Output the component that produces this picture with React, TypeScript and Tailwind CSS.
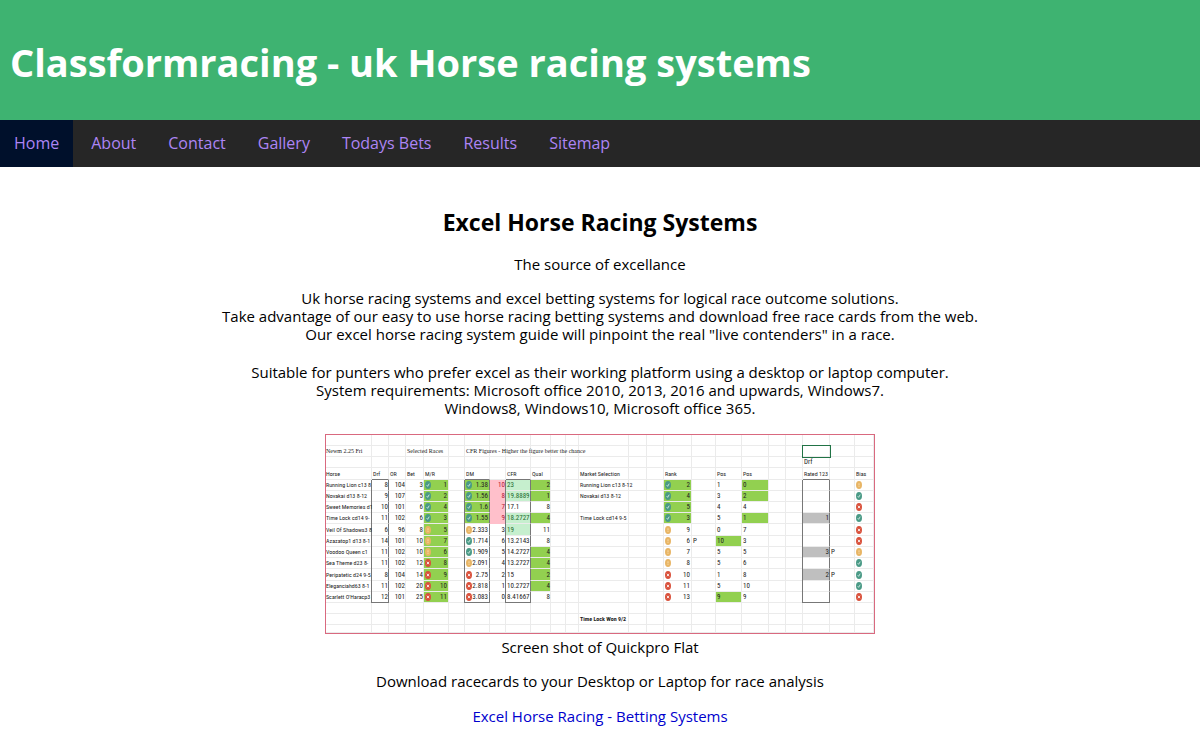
import { clsx } from "clsx"

type Mark = "ok" | "warn" | "bad"

type Runner = {
  horse: string
  drf: number
  or: number
  bet: number
  mr: number
  mrMark: Mark
  dm: string
  dmMark: Mark
  rating: number
  cfr: string
  cfrHot?: boolean
  qual: number
  qualHot?: boolean
  selection?: string
  rank: number
  rankMark: Mark
  placed?: string
  pos1: number
  pos1Hot?: boolean
  pos2: number
  pos2Hot?: boolean
  rated?: number
  ratedNote?: string
  bias: Mark
}

const NAV = ["Home", "About", "Contact", "Gallery", "Todays Bets", "Results", "Sitemap"]

const COLUMNS = [
  "w-[46px]", "w-[17px]", "w-[17px]", "w-[18px]", "w-[25px]", "w-[16px]", "w-[25px]", "w-[16px]",
  "w-[25px]", "w-[20px]", "w-[15px]", "w-[13px]", "w-[50px]", "w-[18px]", "w-[17px]", "w-[28px]",
  "w-[24px]", "w-[26px]", "w-[27px]", "w-[17px]", "w-[17px]", "w-[27px]", "w-[25px]", "w-[19px]",
]

const HEADINGS = [
  "Horse", "Drf", "OR", "Bet", "M/R", "", "DM", "", "CFR", "Qual", "", "",
  "Market Selection", "", "", "Rank", "", "Pos", "Pos", "", "", "Rated 123", "", "Bias",
]

const RUNNERS: Runner[] = [
  { horse: "Running Lion c13 8", drf: 8, or: 104, bet: 3, mr: 1, mrMark: "ok", dm: "1.38", dmMark: "ok", rating: 10, cfr: "23", cfrHot: true, qual: 2, qualHot: true, selection: "Running Lion c13 8-12", rank: 2, rankMark: "ok", pos1: 1, pos2: 0, pos2Hot: true, bias: "warn" },
  { horse: "Novakai d13 8-12", drf: 9, or: 107, bet: 5, mr: 2, mrMark: "ok", dm: "1.56", dmMark: "ok", rating: 8, cfr: "19.8889", cfrHot: true, qual: 1, qualHot: true, selection: "Novakai d13 8-12", rank: 4, rankMark: "ok", pos1: 3, pos2: 2, pos2Hot: true, bias: "ok" },
  { horse: "Sweet Memories d1", drf: 10, or: 101, bet: 6, mr: 4, mrMark: "ok", dm: "1.6", dmMark: "ok", rating: 7, cfr: "17.1", qual: 8, rank: 5, rankMark: "ok", pos1: 4, pos2: 4, bias: "bad" },
  { horse: "Time Lock cd14 9-", drf: 11, or: 102, bet: 6, mr: 3, mrMark: "ok", dm: "1.55", dmMark: "ok", rating: 9, cfr: "18.2727", cfrHot: true, qual: 4, qualHot: true, selection: "Time Lock cd14 9-5", rank: 3, rankMark: "ok", pos1: 5, pos2: 1, pos2Hot: true, rated: 1, bias: "ok" },
  { horse: "Veil Of Shadows3 8", drf: 6, or: 96, bet: 8, mr: 5, mrMark: "warn", dm: "2.333", dmMark: "warn", rating: 3, cfr: "19", cfrHot: true, qual: 11, rank: 9, rankMark: "warn", pos1: 0, pos2: 7, bias: "bad" },
  { horse: "Azazatop1 d13 8-1", drf: 14, or: 101, bet: 10, mr: 7, mrMark: "warn", dm: "1.714", dmMark: "ok", rating: 6, cfr: "13.2143", qual: 8, rank: 6, rankMark: "warn", placed: "P", pos1: 10, pos1Hot: true, pos2: 3, bias: "bad" },
  { horse: "Voodoo Queen c1", drf: 11, or: 102, bet: 10, mr: 6, mrMark: "warn", dm: "1.909", dmMark: "ok", rating: 5, cfr: "14.2727", qual: 4, qualHot: true, rank: 7, rankMark: "warn", pos1: 5, pos2: 5, rated: 3, ratedNote: "P", bias: "warn" },
  { horse: "Sea Theme d23 8-", drf: 11, or: 102, bet: 12, mr: 8, mrMark: "bad", dm: "2.091", dmMark: "warn", rating: 4, cfr: "13.2727", qual: 4, qualHot: true, rank: 8, rankMark: "warn", pos1: 5, pos2: 6, bias: "ok" },
  { horse: "Peripatetic d24 9-5", drf: 8, or: 104, bet: 14, mr: 9, mrMark: "bad", dm: "2.75", dmMark: "bad", rating: 2, cfr: "15", qual: 2, qualHot: true, rank: 10, rankMark: "bad", pos1: 1, pos2: 8, rated: 2, ratedNote: "P", bias: "ok" },
  { horse: "Eleganciahd63 8-1", drf: 11, or: 102, bet: 20, mr: 10, mrMark: "bad", dm: "2.818", dmMark: "bad", rating: 1, cfr: "10.2727", qual: 4, qualHot: true, rank: 11, rankMark: "bad", pos1: 5, pos2: 10, bias: "ok" },
  { horse: "Scarlett O'Haracp3", drf: 12, or: 101, bet: 25, mr: 11, mrMark: "bad", dm: "3.083", dmMark: "bad", rating: 0, cfr: "8.41667", qual: 8, rank: 13, rankMark: "bad", pos1: 9, pos1Hot: true, pos2: 9, bias: "bad" },
]

const GRID = "border-r border-b border-[#ebebeb] p-0 align-middle font-normal"
const HOT = "bg-[#92d050] border-[#92d050]"
// sides of the outlined ranges
const BOX = "border-r-[#777777] shadow-[-1px_0_0_#777777]"

function MarkIcon({ mark }: { mark: Mark }) {
  const fill = mark === "ok" ? "#4a9a86" : mark === "warn" ? "#e8b565" : "#d9503a"
  return (
    <svg viewBox="0 0 14 18" className="h-2 w-1.5 shrink-0" preserveAspectRatio="none" aria-hidden="true">
      <ellipse cx="7" cy="9" rx="7" ry="9" fill={fill} />
      {mark === "ok" && <path d="M4 9.5 6.2 12l3.6-6" fill="none" stroke="#e8f6f2" strokeWidth="1.8" />}
      {mark === "warn" && <path d="M7 5v5M7 11.5v2" fill="none" stroke="#fbe6bd" strokeWidth="1.8" />}
      {mark === "bad" && <path d="M4.6 6.2 9.4 11.8M9.4 6.2 4.6 11.8" fill="none" stroke="#fff" strokeWidth="2" />}
    </svg>
  )
}

function Marked({ mark, value }: { mark: Mark; value: string | number }) {
  return (
    <div className="flex items-center justify-between px-px">
      <MarkIcon mark={mark} />
      <span>{value}</span>
    </div>
  )
}

function Blank({ count }: { count: number }) {
  return (
    <>
      {Array.from({ length: count }, (_, i) => (
        <td key={i} className={GRID} />
      ))}
    </>
  )
}

function RunnerRow({ r, index }: { r: Runner; index: number }) {
  const last = index === RUNNERS.length - 1
  const box = clsx(BOX, last && "border-b-[#777777]")
  const top = index < 4
  return (
    <tr className={index === 4 || index === 8 ? "h-3" : "h-[11px]"}>
      <td className={clsx(GRID, "text-[6px]")}>{r.horse}</td>
      <td className={clsx(GRID, box, "text-right")}>{r.drf}</td>
      <td className={clsx(GRID, "text-right")}>{r.or}</td>
      <td className={clsx(GRID, "text-right")}>{r.bet}</td>
      <td className={clsx(GRID, HOT)}><Marked mark={r.mrMark} value={r.mr} /></td>
      <td className={GRID} />
      <td className={clsx(GRID, top && HOT, box)}><Marked mark={r.dmMark} value={r.dm} /></td>
      <td className={clsx(GRID, "text-right", top && "border-[#ffc0cb] bg-[#ffc0cb] text-[#b01030]")}>{r.rating}</td>
      <td className={clsx(GRID, r.cfrHot && "border-[#c6efce] bg-[#c6efce] text-[#1f6b2e]", box, "pl-px")}>{r.cfr}</td>
      <td className={clsx(GRID, "text-right", r.qualHot && HOT)}>{r.qual}</td>
      <Blank count={2} />
      <td className={clsx(GRID, "pl-px text-[6px]")}>{r.selection}</td>
      <Blank count={2} />
      <td className={clsx(GRID, top && HOT)}><Marked mark={r.rankMark} value={r.rank} /></td>
      <td className={clsx(GRID, "pl-px")}>{r.placed}</td>
      <td className={clsx(GRID, "pl-px", r.pos1Hot && HOT)}>{r.pos1}</td>
      <td className={clsx(GRID, "pl-px", r.pos2Hot && HOT)}>{r.pos2}</td>
      <Blank count={2} />
      <td className={clsx(GRID, "text-right", r.rated && "bg-[#bfbfbf]", box)}>{r.rated}</td>
      <td className={clsx(GRID, "pl-px")}>{r.ratedNote}</td>
      <td className={clsx(GRID, "pl-px")}><MarkIcon mark={r.bias} /></td>
    </tr>
  )
}

function RaceSheet() {
  return (
    <table className="mx-auto w-[550px] table-fixed border-separate border-spacing-0 overflow-hidden border border-[#d9697f] text-left font-['Liberation_Sans_Narrow','Roboto_Condensed','Liberation_Sans',sans-serif] text-[7px] leading-[10px] whitespace-nowrap text-[#222222]">
      <colgroup>
        {COLUMNS.map((width, i) => (
          <col key={i} className={width} />
        ))}
      </colgroup>
      <thead>
        <tr className="h-[11px]"><Blank count={24} /></tr>
        <tr className="h-[11px] font-['Liberation_Serif',serif] text-[6px]">
          <td className={GRID}>Newm 2.25 Fri</td>
          <Blank count={2} />
          <td className={clsx(GRID, "pl-px")}>Selected Races</td>
          <Blank count={2} />
          <td className={clsx(GRID, "pl-px")}>CFR Figures - Higher the figure better the chance</td>
          <Blank count={14} />
          <td className={clsx(GRID, "outline outline-[#217346]")} />
          <Blank count={2} />
        </tr>
        <tr className="h-[11px]">
          <Blank count={21} />
          <td className={clsx(GRID, "pl-px")}>Drf</td>
          <Blank count={2} />
        </tr>
        <tr className="h-3 text-[6px]">
          {HEADINGS.map((heading, i) => (
            <th key={i} scope="col" className={clsx(GRID, i > 0 && "pl-px", [1, 6, 8, 21].includes(i) && "border-b-[#777777]")}>
              {heading}
            </th>
          ))}
        </tr>
      </thead>
      <tbody>
        {RUNNERS.map((r, i) => (
          <RunnerRow key={r.horse} r={r} index={i} />
        ))}
        <tr className="h-[11px]"><Blank count={24} /></tr>
        <tr className="h-[11px] text-[6px]">
          <Blank count={12} />
          <td className={clsx(GRID, "pl-px")}>
            <strong>Time Lock Won 9/2</strong>
          </td>
          <Blank count={11} />
        </tr>
        <tr className="h-2"><Blank count={24} /></tr>
      </tbody>
    </table>
  )
}

export default function App() {
  return (
    <div className="min-h-screen bg-white font-['Segoe_UI','Open_Sans','Noto_Sans',sans-serif] text-black">
      <header className="bg-[#3eb371] px-2.5 pt-[34px] pb-[30px]">
        <h1 className="text-[38px] leading-14 font-bold text-white">Classformracing - uk Horse racing systems</h1>
      </header>

      <nav className="flex flex-wrap gap-1 bg-[#262626]">
        {NAV.map((item, i) => (
          <a
            key={item}
            href="#"
            aria-current={i === 0 ? "page" : undefined}
            className={clsx("px-3.5 py-3 text-base leading-[23px] text-[#ad85f5]", i === 0 && "bg-[#00102b]")}
          >
            {item}
          </a>
        ))}
      </nav>

      <main className="px-4 pt-10 text-center text-[15px] leading-[18px]">
        <h2 className="text-[23px] leading-[30px] font-bold">Excel Horse Racing Systems</h2>
        <p className="mt-[18px]">The source of excellance</p>
        <p className="mt-4">
          Uk horse racing systems and excel betting systems for logical race outcome solutions.
          <br />
          Take advantage of our easy to use horse racing betting systems and download free race cards from the web.
          <br />
          Our excel horse racing system guide will pinpoint the real "live contenders" in a race.
        </p>
        <p className="mt-5">
          Suitable for punters who prefer excel as their working platform using a desktop or laptop computer.
          <br />
          System requirements: Microsoft office 2010, 2013, 2016 and upwards, Windows7.
          <br />
          Windows8, Windows10, Microsoft office 365.
        </p>
        <figure className="mt-[17px]">
          <RaceSheet />
          <figcaption className="mt-1">Screen shot of Quickpro Flat</figcaption>
        </figure>
        <p className="mt-4">Download racecards to your Desktop or Laptop for race analysis</p>
        <p className="mt-[17px]">
          <a href="#" className="text-[#0000cd]">Excel Horse Racing - Betting Systems</a>
        </p>
      </main>
    </div>
  )
}
